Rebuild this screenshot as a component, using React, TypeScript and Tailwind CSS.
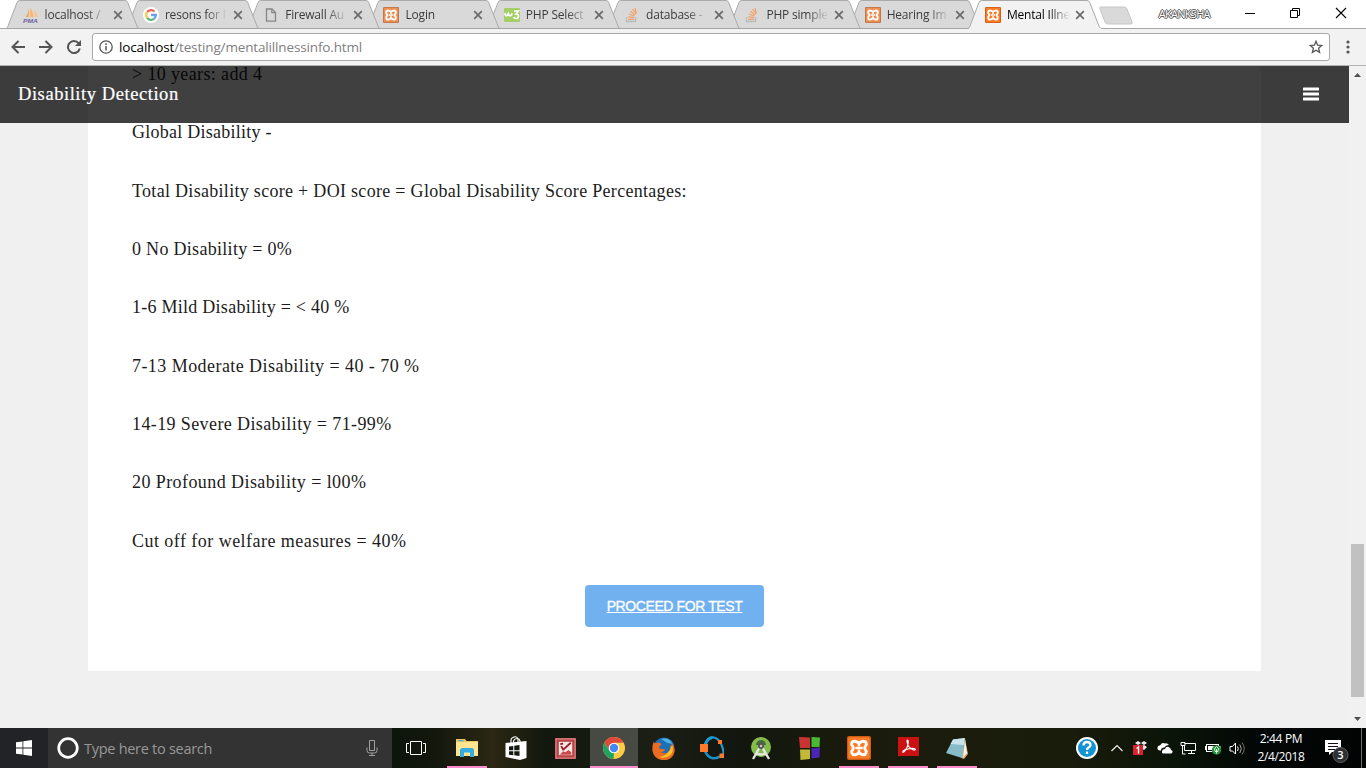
import type { ReactNode } from "react";

/* ---------- favicons ---------- */

const Pma = () => (
  <svg width="16" height="16" viewBox="0 0 16 16">
    <path d="M6 1v9H2.500C4 8 5.500 5 6 1z" fill="#f7a85c" />
    <path d="M7 1c2 2 3 5 3.500 9H7z" fill="#f9b870" />
    <path d="M11 3c2 2 3.500 4 4 7h-3.500z" fill="#fbc58a" />
    <text x="0" y="15.500" fontSize="5.500" fontWeight="bold" fontStyle="italic" fill="#68689c" fontFamily="Liberation Sans, sans-serif" textLength="15" lengthAdjust="spacingAndGlyphs">PMA</text>
  </svg>
);

const Google = () => (
  <svg width="16" height="16" viewBox="0 0 16 16" fill="none" strokeWidth="2.3">
    <circle cx="8" cy="8" r="8" fill="#fff" />
    <path d="M4.200 5A4.800 4.800 0 0 1 11.500 4.500" stroke="#ea6458" />
    <path d="M4.200 11a5 5 0 0 1 0-6" stroke="#fbc94a" />
    <path d="M11.300 11.700A4.900 4.900 0 0 1 4.200 11" stroke="#5cba73" />
    <path d="M8 8h4.900a4.800 4.800 0 0 1-1.700 3.600" stroke="#6a9df5" />
  </svg>
);

const Doc = () => (
  <svg width="16" height="16" viewBox="0 0 16 16" fill="none" stroke="#868686" strokeWidth="1.300">
    <path d="M3.500 2h5.500l3.500 3.500v8.700h-9z" />
    <path d="M8.800 2v3.700h3.700" />
  </svg>
);

const Xampp = ({ size, soft }: { size: number; soft?: boolean }) => (
  <svg width={size} height={size} viewBox="0 0 24 24">
    <rect width="24" height="24" rx="2" fill={soft ? "#b87148" : "#cc5c14"} />
    <rect x="1.200" y="1.200" width="21.600" height="21.600" rx="1.500" fill={soft ? "#ee8f52" : "#fb7a24"} />
    <path
      d="M7.500 5.200c-3 0-3.800 3.300-1.800 5.100.8.700.8 2.700 0 3.400-2 2-.8 5.100 1.800 5.100 2.400 0 2.500-1.500 4.500-1.500s2.100 1.500 4.500 1.500c2.600 0 3.800-3.100 1.800-5.100-.8-.7-.8-2.700 0-3.400 2-1.800 1.200-5.100-1.800-5.100-2.400 0-2.500 1.500-4.500 1.500s-2.100-1.500-4.500-1.500z"
      fill="none" stroke="#fff" strokeWidth="2.900"
    />
    <path d="M9.500 12h5M12 7v2.200M12 14.800V17" stroke="#fff" strokeWidth="2.600" strokeLinecap="round" />
  </svg>
);

const W3 = () => (
  <svg width="16" height="16" viewBox="0 0 16 16">
    <rect y="1" width="16" height="14" rx="1" fill="#a3cf66" />
    <path d="M.8 6c.5 2 1 3 2.200 2.600C4 8.200 4 7 4.200 6.600c.5 1.800 1.500 2.500 2.800 1.800.8-.4.900-1.400.9-2.200M10 4h4.500l-2.500 3c3.500 0 3 4.500.2 4.500-1.200 0-2-.5-2.500-1.400" fill="none" stroke="#fff" strokeWidth="1.700" />
  </svg>
);

const Stack = () => (
  <svg width="16" height="16" viewBox="0 0 16 16" fill="none">
    <path d="M2.500 10v4.500h9V10" stroke="#b9babc" strokeWidth="1.300" />
    <path d="M4.200 12.300h5.800M4.300 9.900l5.800.8M4.800 7l5.600 2M6.300 4.300l4.800 3.600M8.500 2l3.600 4.900M11 .8l1.300 5.700" stroke="#f2a066" strokeWidth="1.200" />
  </svg>
);

/* ---------- browser window ---------- */

type TabInfo = { title: string; icon: ReactNode; active?: boolean; z: string };

const tabs: TabInfo[] = [
  { title: "localhost /", icon: <Pma />, z: "z-[9]" },
  { title: "resons for l", icon: <Google />, z: "z-[8]" },
  { title: "Firewall Au", icon: <Doc />, z: "z-[7]" },
  { title: "Login", icon: <Xampp size={16} soft />, z: "z-[6]" },
  { title: "PHP Select", icon: <W3 />, z: "z-[5]" },
  { title: "database -", icon: <Stack />, z: "z-[4]" },
  { title: "PHP simple", icon: <Stack />, z: "z-[3]" },
  { title: "Hearing Im", icon: <Xampp size={16} soft />, z: "z-[2]" },
  { title: "Mental Illne", icon: <Xampp size={16} />, active: true, z: "z-10" },
];

const Tab = ({ title, icon, active, z }: TabInfo) => (
  <div className={`relative flex h-[29px] w-[120.300px] shrink-0 items-center pl-[16.600px] ${z}`}>
    <svg className="absolute left-0 top-0" width="134" height="29" viewBox="0 0 134 29">
      <path d="M0 28.500C1.500 28 1.500 27 2 26L11 2.500Q11.700.5 13.500.5H119Q121 .5 121.700 2.500L131 26C131.500 27.500 132 28.500 134 28.500z" fill={active ? "#f2f2f2" : "#d9d9d9"} />
      <path d="M0 28.500C1.500 28 1.500 27 2 26L11 2.500Q11.700.5 13.500.5H119Q121 .5 121.700 2.500L131 26C131.500 27.500 132 28.500 134 28.500" fill="none" stroke="#aaaaaa" />
      {active ? <path d="M1 28.500h132" stroke="#f2f2f2" /> : <path d="M0 28.500h134" stroke="#a5a5a5" />}
    </svg>
    <span className="relative mt-px shrink-0">{icon}</span>
    <span className={`relative ml-[6px] w-[64px] whitespace-nowrap text-[12px] leading-[18px] tracking-[-0.200px] [mask-image:linear-gradient(90deg,#000_64%,transparent_98%)] ${active ? "text-black" : "text-[#3c3c3c]"}`}>
      {title}
    </span>
    <svg className="relative ml-[4px] mt-px shrink-0" width="10" height="10" viewBox="0 0 10 10">
      <path d="M1.200 1.200l7.600 7.600M8.800 1.200L1.200 8.800" stroke="#6a6a6a" strokeWidth="1.700" />
    </svg>
  </div>
);

const TabStrip = () => (
  <div className="flex h-[29px] shrink-0 border-b border-[#a9a9a9] bg-white pl-[6px]">
    {tabs.map((t, i) => (
      <Tab key={i} {...t} />
    ))}
    <svg className="ml-[9px] mt-[6px] shrink-0" width="36" height="20" viewBox="0 0 36 20">
      <path d="M2.500 1H26q2 0 3 2l5 13q.8 2-1 2H10q-2 0-3-2L2 3q-.8-2 .5-2z" fill="#d9d9d9" stroke="#c6c6c6" />
    </svg>
    <span className="ml-[25px] mt-[5px] w-[58px] shrink-0 text-[11px] leading-[18px] tracking-[-0.700px] text-white [text-shadow:1px_0_#555,-1px_0_#555,0_1px_#555,0_-1px_#555]">AKANKSHA</span>
    <div className="ml-[28px] flex h-[26px] items-center">
      <svg width="10" height="12" viewBox="0 0 10 12"><path d="M0 6.500h10" stroke="#000" /></svg>
      <svg className="ml-[35px]" width="10" height="10" viewBox="0 0 10 10" fill="none" stroke="#000"><path d="M.5 2.500h7v7h-7zM2.500 2.500v-2h7v7h-2" /></svg>
      <svg className="ml-[35px]" width="12" height="12" viewBox="0 0 12 12" stroke="#000" strokeWidth="1.100"><path d="M1 1l10 10M11 1L1 11" /></svg>
    </div>
  </div>
);

const Toolbar = () => (
  <div className="flex h-[37px] shrink-0 items-center border-b border-[#b0b5b0] bg-[#f2f2f2] pl-[11px]">
    <svg width="14" height="14" viewBox="0 0 14 14" fill="none" stroke="#555" strokeWidth="2"><path d="M14 7H2M7.500 1L1.500 7l6 6" /></svg>
    <svg className="ml-[14px]" width="14" height="14" viewBox="0 0 14 14" fill="none" stroke="#555" strokeWidth="2"><path d="M0 7h12M6.500 1l6 6-6 6" /></svg>
    <svg className="ml-[14px]" width="15" height="14" viewBox="0 0 15 14" fill="none" stroke="#555" strokeWidth="2"><path d="M12.800 8.500A6 6 0 1 1 11.600 3.200" /><path d="M14 0v6H8z" fill="#555" stroke="none" /></svg>
    <div className="ml-[10px] flex h-[28px] w-[1238px] items-center rounded-[3px] border border-[#a9a9a9] bg-white pl-[6px]">
      <svg width="14" height="14" viewBox="0 0 14 14" fill="none" stroke="#555"><circle cx="7" cy="7" r="6.200" strokeWidth="1.300" /><path d="M7 6v4.500M7 3.300v1.600" strokeWidth="1.500" /></svg>
      <span className="ml-[6px] grow whitespace-nowrap text-[13.500px] leading-[20px] tracking-[-0.150px] text-[#808080]">
        <span className="text-black">localhost</span>/testing/mentalillnessinfo.html
      </span>
      <svg className="mr-[6px]" width="14" height="14" viewBox="0 0 14 14" fill="none" stroke="#555" strokeWidth="1.300"><path d="M7 1.300l1.600 3.900 4.200.3-3.200 2.700 1 4.200L7 10.200l-3.600 2.200 1-4.200-3.200-2.700 4.200-.3z" /></svg>
    </div>
    <svg className="ml-[16px]" width="4" height="14" viewBox="0 0 4 14" fill="#555"><circle cx="2" cy="2" r="1.600" /><circle cx="2" cy="7" r="1.600" /><circle cx="2" cy="12" r="1.600" /></svg>
  </div>
);

/* ---------- page ---------- */

const lines: { text: string; track: string }[] = [
  { text: "> 10 years: add 4", track: "tracking-[0.370px]" },
  { text: "Global Disability -", track: "tracking-[0.250px]" },
  { text: "Total Disability score + DOI score = Global Disability Score Percentages:", track: "tracking-[0.300px]" },
  { text: "0 No Disability = 0%", track: "tracking-[0.300px]" },
  { text: "1-6 Mild Disability = < 40 %", track: "tracking-[0.260px]" },
  { text: "7-13 Moderate Disability = 40 - 70 %", track: "tracking-[0.440px]" },
  { text: "14-19 Severe Disability = 71-99%", track: "tracking-[0.390px]" },
  { text: "20 Profound Disability = l00%", track: "tracking-[0.420px]" },
  { text: "Cut off for welfare measures = 40%", track: "tracking-[0.460px]" },
];

const Page = () => (
  <div className="flex h-[662px] shrink-0">
    <div className="relative flex grow flex-col overflow-hidden bg-[#f0f0f0] pl-[88px] font-['Liberation_Serif',serif]">
      <main className="flex h-[605px] w-[1173px] flex-col items-center bg-white px-[44px]">
        <div className="-mt-[6px] w-full">
          {lines.map((l) => (
            <p key={l.text} className={`mb-[29.170px] whitespace-nowrap text-[18px] leading-[29.170px] text-[#1c1c1c] ${l.track}`}>
              {l.text}
            </p>
          ))}
        </div>
        <button className="h-[42px] w-[179px] shrink-0 rounded-[4px] bg-[#71b1f0] pt-px font-['Liberation_Sans',sans-serif] text-[14px] tracking-[-0.400px] text-white underline [-webkit-text-stroke:0.300px_white]">
          PROCEED FOR TEST
        </button>
      </main>
      <header className="absolute inset-x-0 top-0 flex h-[57px] items-center justify-between bg-black/75 pl-[18px] pr-[30px]">
        <span className="text-[18.500px] tracking-[0.560px] text-white [-webkit-text-stroke:0.200px_white]">Disability Detection</span>
        <svg className="-mt-[2px]" width="16" height="14" viewBox="0 0 16 14" fill="#fff"><rect width="16" height="3" y="0.500" rx=".5" /><rect width="16" height="3" y="5.500" rx=".5" /><rect width="16" height="3" y="10.500" rx=".5" /></svg>
      </header>
    </div>
    <div className="flex w-[17px] shrink-0 flex-col items-center bg-[#f1f1f1]">
      <svg className="mt-[7px]" width="7" height="4" viewBox="0 0 7 4"><path d="M3.500 0L7 4H0z" fill="#505050" /></svg>
      <div className="mt-[467px] h-[153px] w-[13px] bg-[#c1c1c1]" />
      <svg className="mt-[20px]" width="7" height="4" viewBox="0 0 7 4"><path d="M3.500 4L7 0H0z" fill="#505050" /></svg>
    </div>
  </div>
);

/* ---------- taskbar ---------- */

const Explorer = () => (
  <svg width="22" height="20" viewBox="0 0 22 20">
    <path d="M0 1h9l1.500 2H22v15H0z" fill="#e9c55b" /><path d="M0 4h22v14H0z" fill="#ffe592" /><path d="M2.500 2h5v1.200h-5z" fill="#3bb0e0" />
    <path d="M4 19v-7.500L5.500 10h11l1.500 1.500V19h-4v-4.500H8V19z" fill="#35ade2" />
  </svg>
);
const Store = () => (
  <svg width="22" height="24" viewBox="0 0 22 24">
    <path d="M6 7V4q0-2 3-3t4 2v3M8.500 7V5q1-2.500 3.500-2.500T15 5v1" fill="none" stroke="#fff" strokeWidth="1.100" />
    <path d="M.5 7L21.500 5v17L15 24 .5 21z" fill="#fff" />
    <path d="M4 10.500l4.300-.6v4.300H4zM9.300 9.800l5.200-.7v5.100H9.300zM4 15.200h4.300v4L4 18.700zM9.300 15.200h5.200v4.900l-5.200-.8z" fill="#14190f" />
  </svg>
);
const RedApp = () => (
  <svg width="21" height="21" viewBox="0 0 22 22">
    <rect width="22" height="22" fill="#bc4144" /><rect x="1" y="1" width="20" height="20" fill="none" stroke="#e09a98" />
    <rect x="4" y="4" width="14" height="14" fill="#f8e8e6" />
    <path d="M9 12l7.500-7M9 13L6.500 8.500M5.500 6.500l3-.5" stroke="#9c1a20" strokeWidth="1.900" /><path d="M5 17.500l3.500-3.500 2.500 1 3-2.500 3 2.500v2.500z" fill="#c9494b" />
  </svg>
);
const Chrome = () => (
  <svg width="22" height="22" viewBox="0 0 22 22">
    <circle cx="11" cy="11" r="11" fill="#fc4" />
    <path d="M11 11L6.400 13.700 1.500 5.400A11 11 0 0 1 20.600 5.800H11z" fill="#df4a3c" />
    <path d="M1.500 5.500L6.500 14 11 16.200 10.500 22A11 11 0 0 1 1.500 5.500z" fill="#1da45e" />
    <circle cx="11" cy="11" r="5.300" fill="#fff" /><circle cx="11" cy="11" r="4.200" fill="#4587f3" />
  </svg>
);
const Firefox = () => (
  <svg width="23" height="23" viewBox="0 0 23 23">
    <circle cx="12" cy="11" r="10.500" fill="#1d6fb8" /><path d="M9 2q8-2 11.500 5l-5-1z" fill="#4bb5e6" />
    <path d="M2 4q0 2 1 2.200L6.500 5.500 9 6.500q1 1.500-1 2L7 10.500q1 2 3.500 1.500l3 .5q-2 3-5 2.300 4 3 7.500.2 3-2.500 2-7l2 1.500-.5-4q4 4.500 3 9.500-2 8-10 8.200Q2 23 .5 14 0 8 2 4z" fill="#ec6d22" />
    <path d="M20 8q3 7-3 11-5 3-10 1Q17 19 20 8z" fill="#fcc32a" />
  </svg>
);
const Octave = () => (
  <svg width="24" height="24" viewBox="0 0 24 24" fill="none">
    <path d="M5 9Q8 0 14 1.500q6 1.500 8.500 10T21 20" stroke="#2199cf" strokeWidth="2.200" />
    <path d="M4.500 14q3 7.500 8.500 8.200 4 .5 7-2" stroke="#1c8ec5" strokeWidth="2.600" />
    <path d="M5 9Q8 1.500 12.500 1.800" stroke="#2199cf" strokeWidth="3" />
    <rect y="8" width="8" height="8" fill="#ff7b29" /><rect x="18" y="4" width="4" height="4" fill="#ff7b29" /><rect x="19.500" y="17.500" width="4.500" height="4.500" fill="#ff7b29" />
  </svg>
);
const Studio = () => (
  <svg width="22" height="24" viewBox="0 0 22 24">
    <circle cx="11" cy="11" r="10" fill="#85bd4c" /><path d="M6 9a5 5 0 0 1 10 0z" fill="#486c3c" />
    <path d="M10.500 10L3 23M11.500 10L19 23M6 17q5 3 10 0" stroke="#e6e6e6" strokeWidth="2.300" fill="none" /><circle cx="11" cy="10" r="3" fill="#555" /><circle cx="11" cy="10" r="1.200" fill="#ccc" />
  </svg>
);
const FourColors = () => (
  <svg width="22" height="24" viewBox="0 0 22 24">
    <path d="M0 1l11 .500V12H1z" fill="#c93330" /><path d="M12.500 1L21 1.500 20.500 11h-8z" fill="#49b832" />
    <path d="M1 13.500h10V23l-9.500 1z" fill="#c2b937" /><path d="M12.500 12.500l8.500-1-.5 10-8 1z" fill="#4a26b6" />
  </svg>
);
const Pdf = () => (
  <svg className="-mt-[3px]" width="21" height="19" viewBox="0 0 21 19">
    <rect width="21" height="19" fill="#cc1112" />
    <path d="M5 15.500q-1-1.500 3-3.200Q11 7 10 3.500q-1-1-1 1Q10 10 13 11.500q4-.5 4.500 1-1 1.500-4.500-1l-5 1q-2 3-3 3z" fill="none" stroke="#fff" strokeWidth="1.200" />
  </svg>
);
const Notes = () => (
  <svg width="23" height="21" viewBox="0 0 23 21">
    <path d="M19 1l3 15-4 5-3-1z" fill="#d9a967" /><path d="M19 1l2 14-4 5z" fill="#f4f3ec" /><path d="M7 1.500L19 0l-3 20L0 15z" fill="#87bdca" /><path d="M7 1.500L19 0l-1.200 7L4.500 6z" fill="#c9e4ea" />
  </svg>
);

const apps: { icon: ReactNode; open?: "yes" | "focus" }[] = [
  { icon: <Explorer />, open: "yes" },
  { icon: <Store /> },
  { icon: <RedApp /> },
  { icon: <Chrome />, open: "focus" },
  { icon: <Firefox /> },
  { icon: <Octave /> },
  { icon: <Studio /> },
  { icon: <FourColors /> },
  { icon: <Xampp size={24} />, open: "yes" },
  { icon: <Pdf />, open: "yes" },
  { icon: <Notes />, open: "yes" },
];

const Tray = () => (
  <div className="ml-auto flex h-full shrink-0 items-center">
    <svg width="22" height="22" viewBox="0 0 22 22"><circle cx="11" cy="11" r="11" fill="#fff" /><circle cx="11" cy="11" r="9" fill="#1493d4" /><path d="M7.500 8.500q0-3.500 3.500-3.500t3.500 3q0 1.500-2 2.500-1.500 1-1.500 2.500M11 14.500v2.500" fill="none" stroke="#fff" strokeWidth="2.300" /></svg>
    <svg className="ml-[13px]" width="12" height="8" viewBox="0 0 12 8" fill="none" stroke="#eee" strokeWidth="1.200"><path d="M.5 7L6 1.500 11.500 7" /></svg>
    <svg className="ml-[10px]" width="16" height="16" viewBox="0 0 16 16"><path d="M5 1l3 2 3-2 3 2-3 2 3 2-3 3-3-2-3 2-3-3 3-2-3-2z" fill="#eee" /><path d="M8 3l3 2-3 2-3-2z" fill="#222" /><rect y="5" width="10" height="10" fill="#d8232e" /><path d="M3.500 8.500L5.500 7v6.500" fill="none" stroke="#fff" strokeWidth="1.400" /></svg>
    <svg className="ml-[8px]" width="16" height="12" viewBox="0 0 16 12" fill="#fff"><path d="M3 8.500q-3-.5-2.500-3T3 3.500Q5 0 8 1.500q2-1 4 1.500Q8.500 3 7.500 5.500 4 5.500 4 8.500z" /><path d="M6 11.500q-1.500-.5-1-2.500t3-2q1-3 3.500-2t2.500 3q2 .5 1.500 2t-1.500 1.500z" /></svg>
    <svg className="ml-[7px]" width="17" height="14" viewBox="0 0 17 14" fill="none" stroke="#fff"><path d="M4.500 2.500h11v7h-11V5M1 1.500h4v3H1zM2.500 5v8h3M8 12.500h7M11.500 10v3" /></svg>
    <svg className="ml-[8px]" width="17" height="14" viewBox="0 0 17 14"><rect x="1.500" y="3.500" width="12" height="7" fill="none" stroke="#fff" /><path d="M3 5h7v4H3zM14 5h1.500v4H14zM0 5h1v4H0z" fill="#fff" /><circle cx="11.500" cy="9" r="4.700" fill="#24933a" /><path d="M11.500 5.500q4 3 0 6-4-3 0-6M11.500 8v4.500" fill="none" stroke="#fff" strokeWidth=".9" /></svg>
    <svg className="ml-[7px]" width="17" height="15" viewBox="0 0 17 15" fill="none" stroke="#fff"><path d="M1 5.500h2.500L6.500 2v11l-3-3H1zM8.500 5.500q1.500 2 0 4.500" /><path d="M10.800 3.500q3 4 0 8.500" stroke="#aaa" /><path d="M13 1.500q4.500 6 0 12" stroke="#777" /></svg>
    <div className="ml-[9px] flex w-[52px] flex-col items-center text-[12px] leading-[18px] tracking-[-0.350px] text-white">
      <span className="whitespace-nowrap">2:44 PM</span>
      <span className="whitespace-nowrap">2/4/2018</span>
    </div>
    <svg className="ml-[18px] mr-[12px] mt-[8px]" width="24" height="26" viewBox="0 0 24 26">
      <path d="M0 1h16v12H7l-3 3v-3H0z" fill="#fff" /><path d="M3 4.500h10M3 7.500h10M3 10.500h7" stroke="#111" />
      <circle cx="15.500" cy="16" r="7.500" fill="#303032" stroke="#5c5c60" /><text x="12.300" y="20" fontSize="11" fontWeight="600" fill="#fff" fontFamily="Open Sans, sans-serif">3</text>
    </svg>
    <div className="mr-[4px] h-full w-px bg-[#6c6f6c]" />
  </div>
);

const Taskbar = () => (
  <div className="flex h-[40px] shrink-0 bg-[linear-gradient(90deg,#0b140c_28%,#14180d_32%,#2b2713_36%,#12180d_40%,#1b1f15_48%,#11160e_54%,#1a1b0c_62%,#1a1c0b_78%,#0a1408_86%,#030706_92%,#020404_100%)]">
    <div className="flex w-[48px] items-center justify-center bg-[#212326]">
      <svg width="16" height="16" viewBox="0 0 16 16" fill="#fff"><path d="M0 2.300L6.500 1.400v6.200H0zM7.300 1.200L16 0v7.600H7.300zM0 8.400h6.500v6.200L0 13.700zM7.300 8.400H16V16l-8.700-1.200z" /></svg>
    </div>
    <div className="flex w-[344px] items-center bg-[#333] pl-[9px] pr-[14px]">
      <svg width="22" height="22" viewBox="0 0 22 22"><circle cx="11" cy="11" r="9.300" fill="none" stroke="#fff" strokeWidth="2.700" /></svg>
      <span className="ml-[5px] grow pt-px text-[14.500px] tracking-[-0.280px] text-[#989898]">Type here to search</span>
      <svg width="12" height="18" viewBox="0 0 12 18" fill="none" stroke="#a0a0a0"><path d="M3.500 1.500h5v10h-5zM1 8.500v3q0 2.500 2.500 2.500h5q2.500 0 2.500-2.500v-3M6 14v2.500M3 16.500h6" /></svg>
    </div>
    <div className="flex w-[48px] shrink-0 items-center justify-center">
      <svg width="20" height="14" viewBox="0 0 20 14" fill="none" stroke="#fff"><path d="M4.500.5h11v13h-11zM3 2.500H.5v9H3M17 2.500h2.500v9H17" /></svg>
    </div>
    <div className="ml-[3px] flex shrink-0 gap-px">
      {apps.map((a, i) => (
        <div key={i} className={`flex w-[48px] flex-col items-center ${a.open === "focus" ? "bg-[#464a43]" : ""}`}>
          <div className="flex h-[38px] items-center pt-[2px]">{a.icon}</div>
          {a.open && <div className={`h-[2px] bg-[#fb8bcb] ${a.open === "focus" ? "w-[48px]" : "w-[40px]"}`} />}
        </div>
      ))}
    </div>
    <Tray />
  </div>
);

export default function App() {
  return (
    <div className="flex h-[768px] w-[1366px] flex-col overflow-hidden font-['Open_Sans','Noto_Sans',sans-serif]">
      <TabStrip />
      <Toolbar />
      <Page />
      <Taskbar />
    </div>
  );
}
